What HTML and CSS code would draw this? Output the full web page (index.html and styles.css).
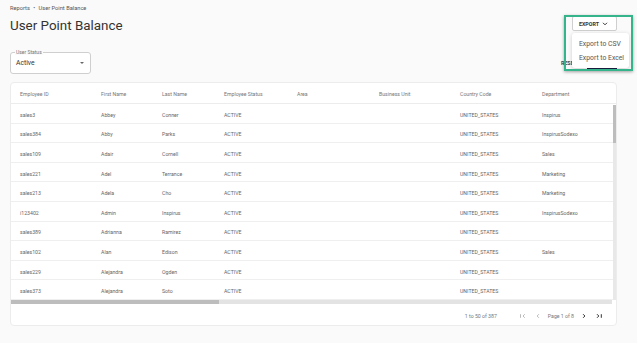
FILE: index.html
```html
<!DOCTYPE html>
<html>
	<head>
		<meta charset="utf-8">
		<title>User Point Balance</title>
		<link rel="stylesheet" href="styles.css">
	</head>
	<body>
		<div class="page">
			<div class="crumbs">Reports <span class="dot">&bull;</span> User Point Balance</div>
			<div class="head">
				<h1 class="title">User Point Balance</h1>
				<div class="export">
					<button class="export-btn">EXPORT
						<svg width="6" height="4" viewBox="0 0 6 4"><path d="M1 0.8 L3 2.8 L5 0.8" fill="none" stroke="#333" stroke-width="1"/></svg>
					</button>
					<div class="export-menu">
						<a href="#">Export to CSV</a>
						<a href="#">Export to Excel</a>
					</div>
					<div class="highlight"></div>
				</div>
			</div>
			<div class="filters">
				<div class="select">
					<span class="select-label">User Status</span>
					<span class="select-value">Active</span>
					<span class="caret"></span>
				</div>
				<div class="filter-actions">
					<span class="reset">RESET</span>
					<span class="apply"></span>
				</div>
			</div>

			<div class="grid">
				<div class="grid-head">
					<span>Employee ID</span>
					<span>First Name</span>
					<span>Last Name</span>
					<span>Employee Status</span>
					<span>Area</span>
					<span>Business Unit</span>
					<span>Country Code</span>
					<span>Department</span>
				</div>
				<div class="grid-body">
					<div class="rows">
						<div class="row"><span>sales3</span><span>Abbey</span><span>Conner</span><span>ACTIVE</span><span></span><span></span><span>UNITED_STATES</span><span>Inspirus</span></div>
						<div class="row"><span>sales384</span><span>Abby</span><span>Parks</span><span>ACTIVE</span><span></span><span></span><span>UNITED_STATES</span><span>InspirusSodexo</span></div>
						<div class="row"><span>sales109</span><span>Adair</span><span>Cornell</span><span>ACTIVE</span><span></span><span></span><span>UNITED_STATES</span><span>Sales</span></div>
						<div class="row"><span>sales221</span><span>Adel</span><span>Terrance</span><span>ACTIVE</span><span></span><span></span><span>UNITED_STATES</span><span>Marketing</span></div>
						<div class="row"><span>sales213</span><span>Adela</span><span>Cho</span><span>ACTIVE</span><span></span><span></span><span>UNITED_STATES</span><span>Marketing</span></div>
						<div class="row"><span>i123402</span><span>Admin</span><span>Inspirus</span><span>ACTIVE</span><span></span><span></span><span>UNITED_STATES</span><span>InspirusSodexo</span></div>
						<div class="row"><span>sales389</span><span>Adrianna</span><span>Ramirez</span><span>ACTIVE</span><span></span><span></span><span>UNITED_STATES</span><span></span></div>
						<div class="row"><span>sales102</span><span>Alan</span><span>Edison</span><span>ACTIVE</span><span></span><span></span><span>UNITED_STATES</span><span>Sales</span></div>
						<div class="row"><span>sales229</span><span>Alejandra</span><span>Ogden</span><span>ACTIVE</span><span></span><span></span><span>UNITED_STATES</span><span></span></div>
						<div class="row"><span>sales373</span><span>Alejandra</span><span>Soto</span><span>ACTIVE</span><span></span><span></span><span>UNITED_STATES</span><span></span></div>
					</div>
					<div class="vscroll"><div class="vthumb"></div></div>
				</div>
				<div class="hscroll"><div class="hthumb"></div></div>
				<div class="grid-foot">
					<span class="count">1 to 50 of 387</span>
					<div class="pager">
						<svg class="off" width="8" height="8" viewBox="0 0 8 8"><path d="M1.5 2.2 V5.8 M5.8 2.2 L4 4 L5.8 5.8" fill="none" stroke="currentColor" stroke-width="0.8"/></svg>
						<svg class="off" width="8" height="8" viewBox="0 0 8 8"><path d="M4.9 2.2 L3.1 4 L4.9 5.8" fill="none" stroke="currentColor" stroke-width="0.8"/></svg>
						<span class="page-no">Page 1 of 8</span>
						<svg width="8" height="8" viewBox="0 0 8 8"><path d="M3.1 2.2 L4.9 4 L3.1 5.8" fill="none" stroke="currentColor" stroke-width="1"/></svg>
						<svg width="8" height="8" viewBox="0 0 8 8"><path d="M2 2.2 L3.8 4 L2 5.8 M6.3 2.2 V5.8" fill="none" stroke="currentColor" stroke-width="1"/></svg>
					</div>
				</div>
			</div>
		</div>
	</body>
</html>
```

FILE: styles.css
```css
*{
    margin: 0;
    padding: 0;
    box-sizing: border-box;
}
a{
    text-decoration: none;
}
body{
    background-color: #fafafa;
    font-family: Roboto, "Liberation Sans", Arial, sans-serif;
    color: #333;
}
.page{
    padding: 4px 20px 0 10px;
}
.crumbs{
    font-size: 5.7px;
    line-height: 9px;
    height: 13px;
    color: #555;
}
.crumbs .dot{
    margin: 0 2px;
}
.head{
    display: flex;
    justify-content: space-between;
    align-items: flex-start;
}
.title{
    font-size: 13.4px;
    line-height: 18px;
    font-weight: 400;
    color: #333;
}
.export{
    position: relative;
    margin-top: -1px;
    z-index: 5;
}
.export-btn{
    display: flex;
    align-items: center;
    gap: 3px;
    width: 45px;
    height: 15px;
    padding-left: 6px;
    background-color: #fff;
    border: 1px solid #cfcfcf;
    border-radius: 2px;
    font-family: Roboto, "Liberation Sans", sans-serif;
    font-size: 5.3px;
    font-weight: 700;
    color: #333;
}
.export-menu{
    position: absolute;
    left: 0;
    top: 17px;
    width: 57px;
    height: 35px;
    padding-top: 4px;
    background-color: #fff;
    border-radius: 3px;
    box-shadow: 0 1px 4px rgba(0, 0, 0, 0.18);
}
.export-menu a{
    display: block;
    padding-left: 7px;
    font-size: 6.8px;
    line-height: 14px;
    color: #555;
}
.highlight{
    position: absolute;
    left: -8px;
    top: -1px;
    width: 69px;
    height: 56px;
    border: 2px solid #35b48c;
    box-shadow: 0 1px 3px rgba(0, 0, 0, 0.35);
}
.filters{
    display: flex;
    justify-content: space-between;
    align-items: center;
    margin-top: 17px;
}
.select{
    position: relative;
    display: flex;
    align-items: center;
    width: 81px;
    height: 22px;
    padding-left: 5px;
    background-color: #fff;
    border: 1px solid #cfcfcf;
    border-radius: 3px;
}
.select-label{
    position: absolute;
    left: 4px;
    top: -4px;
    padding: 0 1px;
    background-color: #fafafa;
    font-size: 5px;
    line-height: 6px;
    color: #777;
}
.select-value{
    font-size: 6.8px;
    color: #333;
}
.caret{
    position: absolute;
    right: 6px;
    top: 9px;
    border-left: 2px solid transparent;
    border-right: 2px solid transparent;
    border-top: 2px solid #666;
}
.filter-actions{
    display: flex;
    align-items: center;
    gap: 4px;
    height: 16px;
}
.reset{
    width: 22px;
    font-size: 5.3px;
    font-weight: 700;
    color: #444;
}
.apply{
    width: 30px;
    height: 16px;
    background-color: #1d1f45;
    border-radius: 2px;
}
.grid{
    margin-top: 8px;
    width: 607px;
    background-color: #fff;
    border: 1px solid #ececec;
    border-radius: 4px;
    font-size: 5.2px;
    color: #666;
}
.grid-head,
.row{
    display: grid;
    grid-template-columns: 81px 61px 62px 73px 82px 81px 82px 81px;
    align-items: center;
}
.grid-head{
    height: 21px;
    padding-top: 2px;
    border-bottom: 1px solid #ececec;
    color: #777;
}
.grid-head span,
.row span{
    padding-left: 9px;
    white-space: nowrap;
}
.grid-body{
    display: flex;
    height: 196px;
    overflow: hidden;
}
.rows{
    width: 602px;
}
.row{
    height: 19.6px;
    padding-top: 3px;
    border-bottom: 1px solid #efefef;
}
.vscroll{
    width: 4px;
    margin-top: 1px;
    background-color: #e8e8e8;
}
.vthumb{
    height: 38px;
    background-color: #bdbdbd;
}
.hscroll{
    height: 4px;
    margin-right: 4px;
    background-color: #e3e3e3;
}
.hthumb{
    width: 208px;
    height: 4px;
    background-color: #bdbdbd;
}
.grid-foot{
    display: flex;
    justify-content: flex-end;
    align-items: center;
    height: 21px;
    padding-top: 2px;
    padding-right: 13px;
    color: #777;
}
.count{
    margin-right: 22px;
}
.pager{
    display: flex;
    align-items: center;
    gap: 6px;
    color: #333;
}
.pager svg + svg{
    margin-left: 1px;
}
.pager .off{
    color: #aaa;
}
.page-no{
    color: #777;
}
```
